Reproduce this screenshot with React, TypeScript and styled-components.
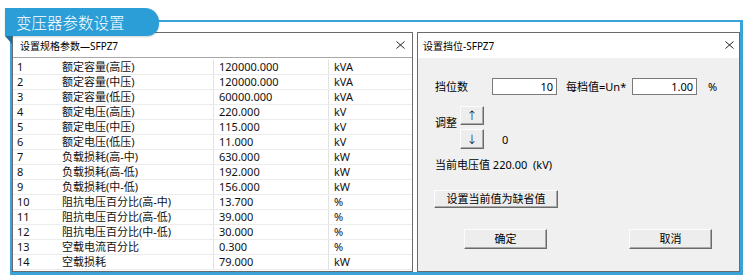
import React from "react";
import styled, { createGlobalStyle } from "styled-components";

const GlobalStyle = createGlobalStyle`
    html, body {
        margin: 0;
        padding: 0;
        background: #ffffff;
    }
    body {
        font-family: "Noto Sans", "Noto Sans CJK SC", sans-serif;
        color: #000;
    }
`;

const Frame = styled.div`
    position: relative;
    box-sizing: border-box;
    margin: 20px 0 0 10px;
    width: 733px;
    height: 255px;
    border-style: solid;
    border-color: #3aa2d6;
    border-width: 2px 3px 3px 2px;
    padding-top: 10px;
    display: flex;
    gap: 4px;
`;

const Ribbon = styled.div`
    position: absolute;
    left: -7px;
    top: -14px;
    width: 154px;
    height: 28px;
    box-sizing: border-box;
    padding-left: 11px;
    background: #2b9ed8;
    border-radius: 0 14px 12px 0;
    box-shadow: 0 1px 2px rgba(0, 0, 0, 0.18);
    color: #fff;
    font-family: "Noto Sans CJK SC", sans-serif;
    font-size: 15.5px;
    font-weight: 300;
    line-height: 28px;
    z-index: 2;

    &::after {
        content: "";
        position: absolute;
        left: 0;
        top: 28px;
        border-top: 8px solid #1c6f9b;
        border-left: 7px solid transparent;
    }
`;

const Dialog = styled.section<{ $width?: number; $body?: string }>`
    box-sizing: border-box;
    ${({ $width }) => ($width ? `width: ${$width}px;` : "flex: 1;")}
    height: 240px;
    border: 1px solid #6a6a6a;
    background: ${({ $body }) => $body || "#fff"};
    display: flex;
    flex-direction: column;
`;

const TitleBar = styled.div<{ $pad: number; $bordered?: boolean }>`
    height: 24px;
    flex: none;
    display: flex;
    align-items: center;
    justify-content: space-between;
    padding: 0 ${({ $pad }) => $pad}px 0 ${({ $pad }) => $pad}px;
    background: #fff;
    font-size: 10px;
    border-bottom: 1px solid ${({ $bordered }) => ($bordered ? "#a8a8a8" : "#fff")};
`;

const Close = () => (
    <svg width="9" height="8" viewBox="0 0 9 8">
        <path d="M0.5 0.5 L8.5 7.5 M8.5 0.5 L0.5 7.5" stroke="#222" strokeWidth="1" fill="none" />
    </svg>
);

const List = styled.div`
    padding-top: 2px;
    font-size: 11px;
    color: #111;
`;

const Row = styled.div`
    display: grid;
    grid-template-columns: 45px 155px 115px 1fr;
    height: 15px;
    box-sizing: border-box;
    border-bottom: 1px solid #ececec;
`;

const Cell = styled.div<{ $line?: boolean }>`
    padding-left: ${({ $line }) => ($line ? 5 : 4)}px;
    line-height: 14px;
    white-space: nowrap;
    border-left: ${({ $line }) => ($line ? "1px solid #e2e2e2" : "none")};
`;

const Body = styled.div`
    flex: 1;
    padding: 20px 0 0 17px;
    font-size: 11px;
    display: flex;
    flex-direction: column;
    align-items: flex-start;
`;

const FieldRow = styled.div`
    display: flex;
    align-items: center;
    height: 17px;
`;

const Label = styled.span<{ $w?: number }>`
    ${({ $w }) => ($w ? `width: ${$w}px;` : "")}
    line-height: 15px;
    white-space: nowrap;
`;

const Field = styled.div`
    box-sizing: border-box;
    width: 65px;
    height: 17px;
    background: #fff;
    border: 1px solid #7a7a7a;
    text-align: right;
    padding-right: 3px;
    line-height: 15px;
`;

const Adjust = styled.div`
    margin-top: 11px;
    display: grid;
    grid-template-columns: 25px 24px auto;
    grid-template-rows: 19px 20px;
    row-gap: 4px;
`;

const Btn = styled.div<{ $w: number; $h: number }>`
    box-sizing: border-box;
    width: ${({ $w }) => $w}px;
    height: ${({ $h }) => $h}px;
    background: #ededed;
    border: 1px solid;
    border-color: #fcfcfc #6b6b6b #6b6b6b #fcfcfc;
    box-shadow: inset -1px -1px 0 #a9a9a9;
    display: flex;
    align-items: center;
    justify-content: center;
    font-size: 11px;
    line-height: 14px;
`;

const Arrow = styled.span`
    font-family: "DejaVu Sans", sans-serif;
    font-size: 13px;
    line-height: 13px;
    font-weight: 300;
`;

const Voltage = styled.div`
    margin-top: 8px;
    line-height: 16px;
`;

const Actions = styled.div`
    margin: 21px 0 0 29px;
    display: flex;
    gap: 82px;
`;

const rows: [string, string, string][] = [
    ["额定容量(高压)", "120000.000", "kVA"],
    ["额定容量(中压)", "120000.000", "kVA"],
    ["额定容量(低压)", "60000.000", "kVA"],
    ["额定电压(高压)", "220.000", "kV"],
    ["额定电压(中压)", "115.000", "kV"],
    ["额定电压(低压)", "11.000", "kV"],
    ["负载损耗(高-中)", "630.000", "kW"],
    ["负载损耗(高-低)", "192.000", "kW"],
    ["负载损耗(中-低)", "156.000", "kW"],
    ["阻抗电压百分比(高-中)", "13.700", "%"],
    ["阻抗电压百分比(高-低)", "39.000", "%"],
    ["阻抗电压百分比(中-低)", "30.000", "%"],
    ["空载电流百分比", "0.300", "%"],
    ["空载损耗", "79.000", "kW"],
];

const App: React.FC = () => {
    return (
        <>
            <GlobalStyle />
            <Frame>
                <Ribbon>变压器参数设置</Ribbon>

                <Dialog $width={401}>
                    <TitleBar $pad={7} $bordered>
                        <span>设置规格参数—SFPZ7</span>
                        <Close />
                    </TitleBar>
                    <List>
                        {rows.map(([name, value, unit], i) => (
                            <Row key={i}>
                                <Cell>{i + 1}</Cell>
                                <Cell>{name}</Cell>
                                <Cell $line>{value}</Cell>
                                <Cell $line>{unit}</Cell>
                            </Row>
                        ))}
                    </List>
                </Dialog>

                <Dialog $body="#f0f0f0">
                    <TitleBar $pad={5}>
                        <span>设置挡位-SFPZ7</span>
                        <Close />
                    </TitleBar>
                    <Body>
                        <FieldRow>
                            <Label $w={57}>挡位数</Label>
                            <Field>10</Field>
                            <Label $w={66} style={{ marginLeft: 9 }}>每档值=Un*</Label>
                            <Field>1.00</Field>
                            <Label style={{ marginLeft: 11 }}>%</Label>
                        </FieldRow>

                        <Adjust>
                            <Label style={{ alignSelf: "end", marginBottom: -5 }}>调整</Label>
                            <Btn $w={24} $h={19}><Arrow>↑</Arrow></Btn>
                            <span />
                            <span />
                            <Btn $w={24} $h={20}><Arrow>↓</Arrow></Btn>
                            <Label style={{ alignSelf: "center", marginLeft: 18 }}>0</Label>
                        </Adjust>

                        <Voltage>当前电压值 220.00&nbsp;&nbsp;(kV)</Voltage>

                        <Btn $w={124} $h={18} style={{ marginTop: 17, marginLeft: -1 }}>
                            设置当前值为缺省值
                        </Btn>

                        <Actions>
                            <Btn $w={83} $h={20}>确定</Btn>
                            <Btn $w={83} $h={20}>取消</Btn>
                        </Actions>
                    </Body>
                </Dialog>
            </Frame>
        </>
    );
};

export default App;
